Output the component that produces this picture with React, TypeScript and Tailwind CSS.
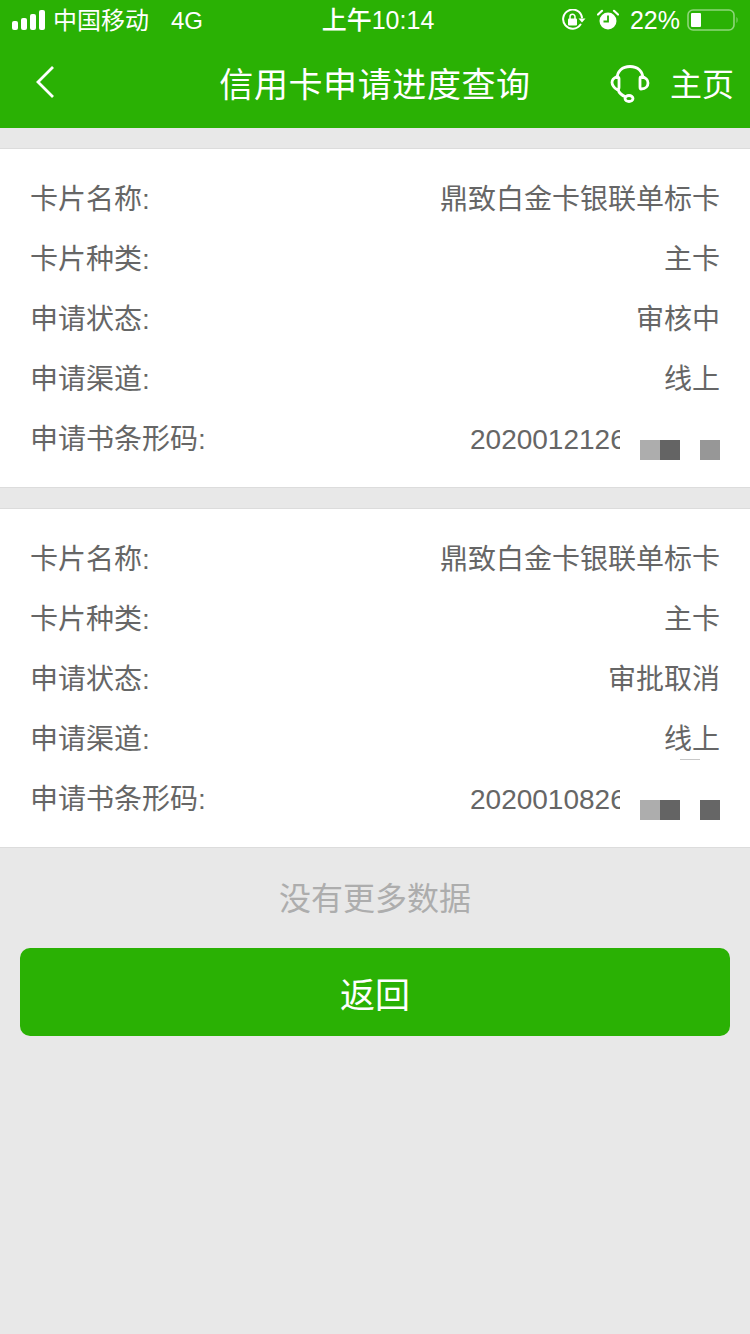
const cjk = "font-['Helvetica_Neue','Liberation_Sans','Noto_Sans_CJK_SC',sans-serif]";

function Signal() {
  return (
    <svg width="34" height="22" viewBox="0 0 34 22" fill="#fff" className="block">
      <rect x="0" y="12" width="6" height="9" rx="2" />
      <rect x="9" y="9" width="6" height="12" rx="2" />
      <rect x="18" y="5" width="6" height="16" rx="2" />
      <rect x="27" y="1" width="6" height="20" rx="2" />
    </svg>
  );
}

function RotationLock() {
  return (
    <svg width="24" height="22" viewBox="0 0 24 22" fill="none" className="block">
      <path d="M18.500 15.500A9.500 9.500 0 1 1 20 8.500" stroke="#fff" strokeWidth="2" strokeLinecap="round" />
      <path d="M16.500 9.500h7l-3.500 4z" fill="#fff" />
      <rect x="6" y="9.500" width="9" height="7" rx="1" fill="#fff" />
      <path d="M8 10V7.800a2.500 2.500 0 0 1 5 0V10" stroke="#fff" strokeWidth="1.500" />
    </svg>
  );
}

function Alarm() {
  return (
    <svg width="22" height="22" viewBox="0 0 22 22" fill="none" className="block">
      <circle cx="11" cy="12" r="8.500" fill="#fff" />
      <path d="M11 6.500V12.500H6.500" stroke="#2ab104" strokeWidth="1.800" />
      <path d="M1 5.500 5 1.800M21 5.500 17 1.800" stroke="#fff" strokeWidth="2.200" strokeLinecap="round" />
    </svg>
  );
}

function Battery() {
  return (
    <svg width="52" height="22" viewBox="0 0 52 22" fill="none" className="block">
      <rect x="1" y="1" width="46" height="20" rx="5" stroke="#8ed67a" strokeWidth="1.600" />
      <rect x="4" y="4" width="10" height="14" rx="1" fill="#fff" />
      <path d="M49.500 8c1.400.6 1.400 5.400 0 6z" fill="#8ed67a" />
    </svg>
  );
}

function Back() {
  return (
    <svg width="20" height="32" viewBox="0 0 20 32" fill="none" className="block">
      <path d="M18 1 3 16 18 31" stroke="#fff" strokeWidth="2.800" />
    </svg>
  );
}

function Headset() {
  return (
    <svg width="40" height="40" viewBox="0 0 40 40" fill="none" className="block">
      <path d="M7 15C7 7 12.500 2.500 20 2.500S33 7 33 15" stroke="#fff" strokeWidth="2.800" />
      <path d="M7 12.500C3.500 14 2 16.500 2 18.500S4 24 7 25.500c1.500 0 2-1 2-2v-9c0-1-1-2-2-2z" stroke="#fff" strokeWidth="2.800" />
      <path d="M31 13c5 0 7 3 7 6s-2 6-7 6c-.700 0-1-1-1-2v-8c0-1 .300-2 1-2z" stroke="#fff" strokeWidth="2.800" />
      <path d="M8 25.500c1 3.500 4 6 8 7.500" stroke="#fff" strokeWidth="2.800" />
      <ellipse cx="19" cy="34.500" rx="4" ry="3" stroke="#fff" strokeWidth="2.800" />
    </svg>
  );
}

function Row({ label, value }: { label: string; value: string }) {
  return (
    <div className="flex h-[60px] items-center justify-between">
      <span>{label}</span>
      <span>{value}</span>
    </div>
  );
}

function CodeRow({ code, third }: { code: string; third: string }) {
  return (
    <div className="flex h-[60px] items-center justify-between">
      <span>申请书条形码:</span>
      <div className="flex items-start">
        <span className="block w-[150px] overflow-hidden whitespace-nowrap">{code}</span>
        <div className="mt-[21px] ml-[20px] flex">
          <div className="h-5 w-5 bg-[#adadad]" />
          <div className="h-5 w-5 bg-[#646464]" />
          <div className="h-5 w-5 bg-white" />
          <div className={`h-5 w-5 ${third}`} />
        </div>
      </div>
    </div>
  );
}

function Card({ status, code, third, mark }: { status: string; code: string; third: string; mark?: boolean }) {
  return (
    <section className="relative border-y border-[#dcdcdc] bg-white pt-[21px] pr-[30px] pb-[17px] pl-[30px] text-[28px] text-[#666666]">
      <Row label="卡片名称:" value="鼎致白金卡银联单标卡" />
      <Row label="卡片种类:" value="主卡" />
      <Row label="申请状态:" value={status} />
      <Row label="申请渠道:" value="线上" />
      <CodeRow code={code} third={third} />
      {mark && <div className="absolute top-[250px] right-[50px] h-px w-5 bg-[#c8c8c8]" />}
    </section>
  );
}

export default function App() {
  return (
    <div className={`flex min-h-[1334px] w-[750px] flex-col bg-[#e8e8e8] ${cjk}`}>
      <header className="h-[128px] bg-[#2ab104] text-white">
        <div className="grid h-[40px] grid-cols-[1fr_auto_1fr] items-center text-[24px]">
          <div className="flex items-center pl-3">
            <Signal />
            <span className="ml-[7px] pt-[1px]">中国移动</span>
            <span className="ml-[22px] pt-[1px]">4G</span>
          </div>
          <span className="ml-[6px] pt-[1px] text-[25px] font-medium">上午10:14</span>
          <div className="flex items-center justify-end pr-[11px]">
            <RotationLock />
            <div className="ml-[11px]"><Alarm /></div>
            <span className="ml-[11px] pt-[1px] text-[25px]">22%</span>
            <div className="ml-[7px]"><Battery /></div>
          </div>
        </div>
        <div className="grid h-[88px] grid-cols-[1fr_auto_1fr] items-center">
          <div className="mb-[4px] pl-[35px]"><Back /></div>
          <h1 className="pt-[2px] text-[34px] font-normal tracking-[0.6px]">信用卡申请进度查询</h1>
          <div className="flex items-center justify-end pr-4">
            <Headset />
            <span className="ml-[20px] pt-[2px] text-[32px]">主页</span>
          </div>
        </div>
      </header>
      <main className="flex flex-col gap-5 pt-5">
        <Card status="审核中" code="2020012126" third="bg-[#979797]" />
        <Card status="审批取消" code="2020010826" third="bg-[#666666]" mark />
      </main>
      <p className="mt-[31px] text-center text-[32px] leading-[40px] text-[#adadad]">没有更多数据</p>
      <div className="mt-[29px] px-5">
        <button className="h-[88px] w-full rounded-[10px] bg-[#2ab104] pt-[8px] text-[35px] text-white">返回</button>
      </div>
    </div>
  );
}
